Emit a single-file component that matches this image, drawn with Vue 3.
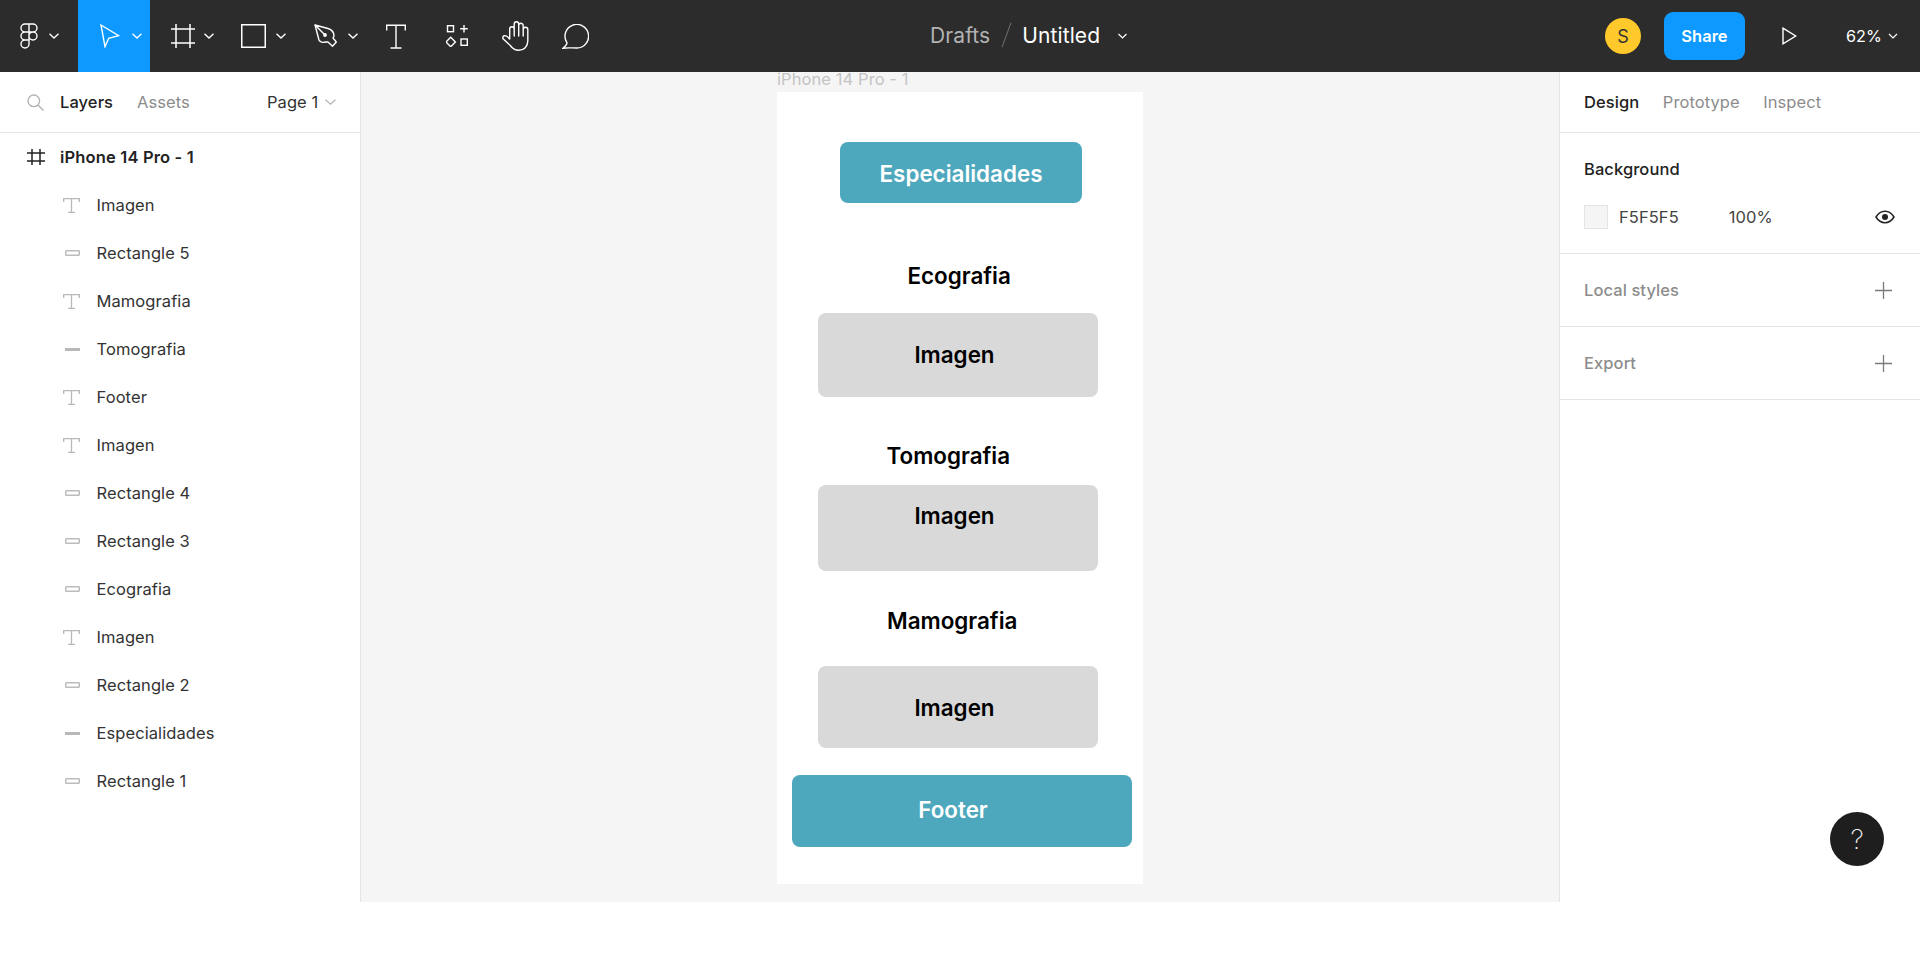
<script setup>
const layers = [
  { name: 'Imagen', icon: 'text' },
  { name: 'Rectangle 5', icon: 'rect' },
  { name: 'Mamografia', icon: 'text' },
  { name: 'Tomografia', icon: 'line' },
  { name: 'Footer', icon: 'text' },
  { name: 'Imagen', icon: 'text' },
  { name: 'Rectangle 4', icon: 'rect' },
  { name: 'Rectangle 3', icon: 'rect' },
  { name: 'Ecografia', icon: 'rect' },
  { name: 'Imagen', icon: 'text' },
  { name: 'Rectangle 2', icon: 'rect' },
  { name: 'Especialidades', icon: 'line' },
  { name: 'Rectangle 1', icon: 'rect' }
]
</script>

<template>
  <div class="app">
    <header class="topbar">
      <div class="tools">
        <div class="tool tool-logo">
          <svg width="18" height="26" viewBox="0 0 18 26" fill="none" stroke="#fff" stroke-width="1.4">
            <path d="M9 1H5a4 4 0 0 0 0 8h4zM9 1h4a4 4 0 0 1 0 8H9zM9 9H5a4 4 0 0 0 0 8h4zM9 17H5a4 4 0 1 0 4 4zM17 13a4 4 0 1 1-8 0 4 4 0 0 1 8 0z" />
          </svg>
          <svg class="chev c-logo" width="10" height="6" viewBox="0 0 10 6" fill="none" stroke="#fff" stroke-width="1.3"><path d="M.5 .8L5 5 9.500 .8" /></svg>
        </div>
        <div class="tool tool-move">
          <svg width="20" height="24" viewBox="0 0 20 24" fill="none" stroke="#fff" stroke-width="1.4">
            <path d="M1 1L18.700 11.700 8.700 14.300 5 22.700z" />
          </svg>
          <svg class="chev c-move" width="10" height="6" viewBox="0 0 10 6" fill="none" stroke="#fff" stroke-width="1.3"><path d="M.5 .8L5 5 9.500 .8" /></svg>
        </div>
        <div class="tool tool-frame">
          <svg width="24" height="24" viewBox="0 0 24 24" fill="none" stroke="#fff" stroke-width="1.5"><path d="M5 0v24M19 0v24M0 5h24M0 19h24" /></svg>
          <svg class="chev c-frame" width="10" height="6" viewBox="0 0 10 6" fill="none" stroke="#fff" stroke-width="1.3"><path d="M.5 .8L5 5 9.500 .8" /></svg>
        </div>
        <div class="tool tool-rect">
          <svg width="25" height="24" viewBox="0 0 25 24" fill="none" stroke="#fff" stroke-width="1.5"><rect x=".75" y=".75" width="23.500" height="22.500" /></svg>
          <svg class="chev c-rect" width="10" height="6" viewBox="0 0 10 6" fill="none" stroke="#fff" stroke-width="1.3"><path d="M.5 .8L5 5 9.500 .8" /></svg>
        </div>
        <div class="tool tool-pen">
          <svg width="23" height="24" viewBox="0 0 23 24" fill="none" stroke="#fff" stroke-width="1.4" stroke-linejoin="round">
            <path d="M1 1L14 4.500C17 5.500 20 8 20 12L19 14 22.300 18 18.500 22.300 14 18 12 18C8 19 6 18 5 16z" />
            <path d="M1 1L10 10" /><circle cx="11" cy="11" r="1.900" fill="#fff" stroke="none" />
          </svg>
          <svg class="chev c-pen" width="10" height="6" viewBox="0 0 10 6" fill="none" stroke="#fff" stroke-width="1.3"><path d="M.5 .8L5 5 9.500 .8" /></svg>
        </div>
        <div class="tool tool-text">
          <svg width="20" height="25" viewBox="0 0 20 25" fill="none" stroke="#fff" stroke-width="1.4">
            <path d="M.7 6.500V1.200h18.600v5.300M10 1.200V24M4.500 24h11" />
          </svg>
        </div>
        <div class="tool tool-res">
          <svg width="22" height="22" viewBox="0 0 22 22" fill="none" stroke="#fff" stroke-width="1.4">
            <rect x="1.500" y=".7" width="6" height="6" /><path d="M18 0v7.500M14.200 3.700h7.500" /><path d="M4.700 12.300L9.400 17l-4.700 4.700L0 17z" /><rect x="15" y="14" width="6.300" height="6.300" />
          </svg>
        </div>
        <div class="tool tool-hand">
          <svg width="27" height="30" viewBox="0 0 27 30" fill="none" stroke="#fff" stroke-width="1.4" stroke-linejoin="round" stroke-linecap="round">
            <path d="M7.700 18V8a2.250 2.250 0 0 1 4.500 0v7M12.200 8V3a2.250 2.250 0 0 1 4.500 0v12M16.700 4.500a2.250 2.250 0 0 1 4.500 0V15M21.200 8.500a2.300 2.300 0 0 1 4.600 0V20c0 5.500-3.800 9.300-9 9.300-4 0-6.500-2-8.500-4.800L1.300 18c-1-1.400-.3-3 1-3.300 1.500-.4 3 .3 5.400 3.300" />
          </svg>
        </div>
        <div class="tool tool-comment">
          <svg width="27" height="25" viewBox="0 0 27 25" fill="none" stroke="#fff" stroke-width="1.4"><path d="M14.500 24C10 24 5 23.500 1 24.200 3 22.500 4.800 20.500 5 18.800A11.800 11.800 0 1 1 14.500 24z" /></svg>
        </div>
      </div>
      <div class="title">
        <span class="drafts">Drafts</span>
        <span class="slash"></span>
        <span class="name">Untitled</span>
        <svg class="title-chev" width="9" height="6" viewBox="0 0 9 6" fill="none" stroke="#fff" stroke-width="1.2"><path d="M.5 1L4.500 5l4-4" /></svg>
      </div>
      <div class="right-tools">
        <div class="avatar">S</div>
        <div class="share">Share</div>
        <svg class="play" width="15" height="18" viewBox="0 0 15 18" fill="none" stroke="#fff" stroke-width="1.4"><path d="M1 1.200L13.700 9 1 16.800z" /></svg>
        <div class="zoom">62%</div>
        <svg class="zoom-chev" width="10" height="6" viewBox="0 0 10 6" fill="none" stroke="#fff" stroke-width="1.2"><path d="M1 1l4 4 4-4" /></svg>
      </div>
    </header>

    <main class="main">
      <aside class="left">
        <div class="left-head">
          <svg class="search" width="17" height="17" viewBox="0 0 17 17" fill="none" stroke="#b3b3b3" stroke-width="1.4"><circle cx="6.800" cy="6.800" r="5.800" /><path d="M11 11l5.500 5.500" /></svg>
          <span class="tab tab-on">Layers</span>
          <span class="tab">Assets</span>
          <span class="page">Page 1</span>
          <svg class="page-chev" width="11" height="6" viewBox="0 0 11 6" fill="none" stroke="#b3b3b3" stroke-width="1.2"><path d="M.5 .8l5 4.400 5-4.400" /></svg>
        </div>
        <div class="frame-row">
          <svg width="18" height="16" viewBox="0 0 18 16" fill="none" stroke="#222" stroke-width="1.5"><path d="M5 0v16M13 0v16M0 4h18M0 12h18" /></svg>
          <span>iPhone 14 Pro - 1</span>
        </div>
        <div v-for="(l, i) in layers" :key="i" class="row">
          <span class="row-icon">
            <svg v-if="l.icon === 'text'" width="17" height="15" viewBox="0 0 17 15" fill="none" stroke="#b8b8b8" stroke-width="1.3"><path d="M.7 4V.7h15.600V4M8.500 .7V14.300M5 14.300h7" /></svg>
            <svg v-else-if="l.icon === 'rect'" class="ri" width="15" height="6" viewBox="0 0 15 6" fill="none" stroke="#bbb" stroke-width="1.500"><rect x=".75" y=".75" width="13.500" height="4.500" rx=".8" /></svg>
            <svg v-else class="ri" width="15" height="3" viewBox="0 0 15 3"><rect width="15" height="3" fill="#b8b8b8" /></svg>
          </span>
          <span>{{ l.name }}</span>
        </div>
      </aside>

      <section class="canvas">
        <div class="frame">
          <div class="frame-label">iPhone 14 Pro - 1</div>
          <div class="btn btn-top">Especialidades</div>
          <div class="heading h-eco">Ecografia</div>
          <div class="box box-1">Imagen</div>
          <div class="heading h-tomo">Tomografia</div>
          <div class="box box-2">Imagen</div>
          <div class="heading h-mamo">Mamografia</div>
          <div class="box box-3">Imagen</div>
          <div class="btn btn-foot">Footer</div>
        </div>
      </section>

      <aside class="right">
        <div class="right-tabs">
          <span class="rtab rtab-on">Design</span>
          <span class="rtab">Prototype</span>
          <span class="rtab">Inspect</span>
        </div>
        <div class="section sec-bg">
          <div class="sec-title">Background</div>
          <div class="bg-row">
            <span class="swatch"></span>
            <span class="hex">F5F5F5</span>
            <span class="pct">100%</span>
            <svg class="eye" width="20" height="14" viewBox="0 0 20 14" fill="none" stroke="#222" stroke-width="1.5"><path d="M1 7c2.300-3.800 5.300-5.800 9-5.800s6.700 2 9 5.800c-2.300 3.800-5.300 5.800-9 5.800S3.300 10.800 1 7z" /><circle cx="10" cy="7" r="3" fill="#222" stroke="none" /></svg>
          </div>
        </div>
        <div class="section sec-row">
          <span>Local styles</span>
          <svg width="17" height="17" viewBox="0 0 17 17" stroke="#7a7a7a" stroke-width="1.3"><path d="M8.500 0v17M0 8.500h17" /></svg>
        </div>
        <div class="section sec-row">
          <span>Export</span>
          <svg width="17" height="17" viewBox="0 0 17 17" stroke="#7a7a7a" stroke-width="1.3"><path d="M8.500 0v17M0 8.500h17" /></svg>
        </div>
      </aside>
      <div class="help">?</div>
    </main>
  </div>
</template>

<style>
html, body { margin: 0; background: #fff; }
</style>

<style scoped>
.app { width: 1920px; height: 964px; overflow: hidden; font-family: Inter, "Noto Sans", sans-serif; background: #fff; }
.topbar { height: 72px; background: #2c2c2c; display: flex; align-items: center; color: #fff; position: relative; }
.tools { display: flex; align-items: center; height: 72px; }
.tool { height: 72px; display: flex; align-items: center; box-sizing: border-box; flex: none; }
.c-logo { margin-left: 11px; }
.c-move { margin-left: 12px; }
.c-frame { margin-left: 9px; }
.c-rect { margin-left: 10px; }
.c-pen { margin-left: 11px; }
.tool-logo { width: 78px; padding-left: 20px; }
.tool-move { width: 72px; padding-left: 22px; background: #0d99ff; }
.tool-frame { width: 70px; padding-left: 21px; }
.tool-rect { width: 72px; padding-left: 21px; }
.tool-pen { width: 80px; padding-left: 22px; }
.tool-text { width: 60px; padding-left: 14px; }
.tool-res { width: 60px; padding-left: 14px; }
.tool-hand { width: 58px; padding-left: 10px; }
.tool-comment { width: 50px; padding-left: 12px; }
.title { position: absolute; left: 930px; top: 0; height: 70px; display: flex; align-items: center; font-size: 21px; letter-spacing: .005em; }
.drafts { color: #b3b3b3; }
.slash { width: 1px; height: 26px; background: #6b6b6b; transform: rotate(20deg); margin: 0 15px 0 16px; }
.name { color: #fff; font-weight: 400; }
.title-chev { margin-left: 18px; margin-top: 2px; }
.right-tools { margin-left: auto; display: flex; align-items: center; }
.avatar { width: 36px; height: 36px; border-radius: 50%; background: #ffc92b; color: #333; font-size: 18px; display: flex; align-items: center; justify-content: center; }
.share { width: 81px; height: 48px; margin-left: 23px; border-radius: 9px; background: #0d99ff; font-size: 16.5px; font-weight: 600; display: flex; align-items: center; justify-content: center; }
.play { margin-left: 37px; }
.zoom { margin-left: 49px; width: 33px; font-size: 16.2px; white-space: nowrap; }
.zoom-chev { margin-left: 9px; margin-right: 22px; }
.main { position: relative; height: 830px; display: flex; }
.left { width: 361px; box-sizing: border-box; border-right: 1px solid #e5e5e5; background: #fff; flex: none; letter-spacing: .005em; }
.left-head { height: 61px; box-sizing: border-box; border-bottom: 1px solid #e5e5e5; display: flex; align-items: center; padding-left: 27px; font-size: 16.5px; }
.search { margin-right: 16px; }
.tab { color: #8c8c8c; margin-right: 24px; }
.tab-on { color: #222; font-weight: 500; }
.page { margin-left: 53px; color: #333; }
.page-chev { margin-left: 7px; }
.frame-row { height: 48px; display: flex; align-items: center; padding-left: 27px; font-size: 16.5px; letter-spacing: .01em; font-weight: 600; color: #222; }
.frame-row span { margin-left: 15px; }
.row { height: 48px; display: flex; align-items: center; padding-left: 63px; font-size: 16.5px; color: #333; }
.row-icon { width: 33.500px; display: flex; align-items: center; flex: none; }
.ri { margin-left: 2px; }
.canvas { flex: 1; background: #f5f5f5; padding: 20px 0 0 416px; }
.frame { position: relative; width: 366px; height: 792px; background: #fff; display: flex; flex-direction: column; align-items: flex-start; }
.frame-label { position: absolute; left: 0; top: -23px; font-size: 16.5px; letter-spacing: .005em; line-height: 20px; color: #c4c4c4; }
.btn { background: #4ea8bd; color: #fff; border-radius: 8px; font-weight: 600; display: flex; align-items: center; justify-content: center; box-sizing: border-box; font-size: 22.400px; }
.btn-top { width: 242px; height: 61px; margin: 50px 0 0 63px; padding-top: 2px; }
.btn-foot { width: 340px; height: 72px; margin: 27px 0 0 15px; padding: 0 18px 4px 0; }
.heading { font-size: 22.400px; line-height: 30px; font-weight: 600; color: #000; }
.box { width: 280px; background: #d9d9d9; border-radius: 8px; font-size: 22.400px; font-weight: 600; color: #000; margin-left: 41px; box-sizing: border-box; display: flex; justify-content: center; padding-right: 7px; }
.h-eco { margin: 58px 0 0 130.500px; }
.box-1 { height: 84px; margin-top: 22px; align-items: center; padding-bottom: 2px; }
.h-tomo { margin: 44px 0 0 109.500px; }
.box-2 { height: 86px; margin-top: 14px; padding-top: 16px; line-height: 30px; }
.h-mamo { margin: 35px 0 0 110px; }
.box-3 { height: 82px; margin-top: 30px; align-items: center; }
.right { width: 361px; flex: none; box-sizing: border-box; border-left: 1px solid #e5e5e5; background: #fff; letter-spacing: .005em; }
.right-tabs { height: 61px; box-sizing: border-box; border-bottom: 1px solid #e5e5e5; display: flex; align-items: center; padding-left: 24px; font-size: 16.5px; gap: 23.500px; }
.rtab { color: #8c8c8c; }
.rtab-on { color: #222; font-weight: 500; }
.section { border-bottom: 1px solid #e5e5e5; box-sizing: border-box; padding: 0 22px 0 24px; }
.sec-bg { height: 121px; padding-top: 26px; }
.sec-title { font-size: 16.5px; font-weight: 500; color: #222; line-height: 20px; }
.bg-row { display: flex; align-items: center; margin-top: 26px; height: 24px; font-size: 16.5px; color: #444; }
.swatch { width: 24px; height: 24px; box-sizing: border-box; background: #f5f5f5; border: 1px solid #e5e5e5; }
.hex { margin-left: 11px; }
.pct { margin-left: 50px; }
.eye { margin-left: auto; margin-right: 3px; }
.sec-row { height: 73px; display: flex; align-items: center; justify-content: space-between; font-size: 16.5px; font-weight: 500; color: #8c8c8c; padding-right: 28px; }
.help { position: absolute; left: 1830px; top: 740px; width: 54px; height: 54px; border-radius: 50%; background: #1e1e1e; color: #eee; font-size: 27px; font-weight: 200; display: flex; align-items: center; justify-content: center; }
</style>
